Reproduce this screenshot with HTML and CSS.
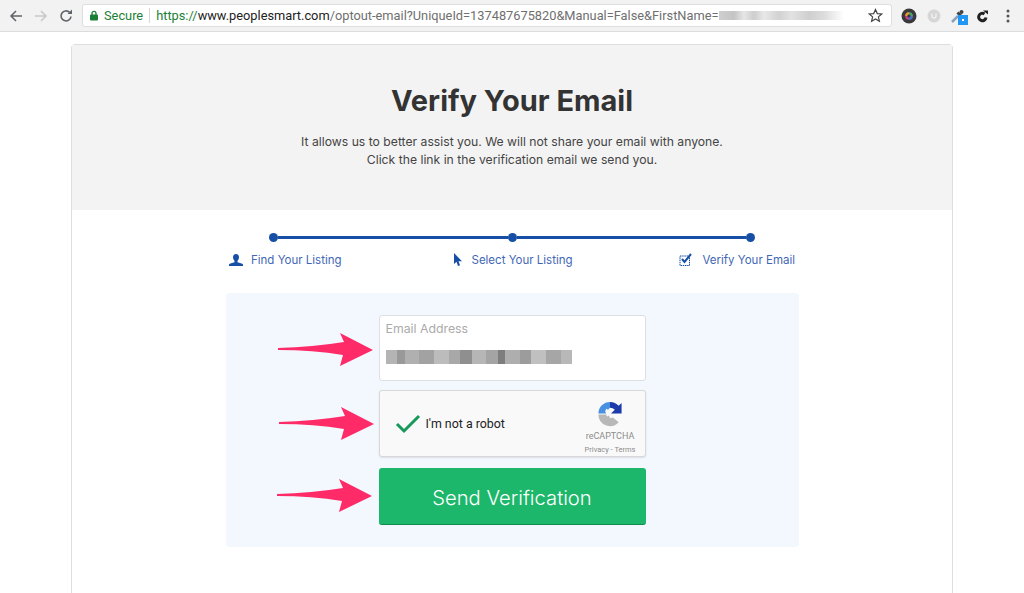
FILE: index.html
```html
<!DOCTYPE html>
<html lang="en">
<head>
  <meta charset="UTF-8">
  <title>Verify Your Email</title>
  <link rel="stylesheet" href="styles.css">
</head>
<body>
  <div class="toolbar">
    <svg class="nav-icon" width="16" height="16" viewBox="0 0 16 16"><path d="M14 8H3M8 3 3 8l5 5" fill="none" stroke="#5f6368" stroke-width="1.5"/></svg>
    <svg class="nav-icon" width="16" height="16" viewBox="0 0 16 16"><path d="M2 8h11M8 3l5 5-5 5" fill="none" stroke="#c8c8c8" stroke-width="1.5"/></svg>
    <svg class="nav-icon" width="16" height="16" viewBox="0 0 16 16"><path d="M13 8.500A5 5 0 1 1 11.600 4.400" fill="none" stroke="#5f6368" stroke-width="1.600"/><path d="M9.500 6h4.500V1.500z" fill="#5f6368"/></svg>
    <div class="omnibox">
      <svg class="lock" width="10" height="11" viewBox="0 0 10 11"><path d="M3 5V3.400a2 2 0 0 1 4 0V5" fill="none" stroke="#1b7f37" stroke-width="1.300"/><rect x="1" y="4.500" width="8" height="6" rx="1" fill="#1b7f37"/></svg>
      <span class="secure">Secure</span>
      <span class="url"><span class="https">https://</span><span class="domain">www.peoplesmart.com</span>/optout-email?UniqueId=137487675820&amp;Manual=False&amp;FirstName=</span>
      <div class="url-blur"></div>
      <svg class="star" width="15" height="15" viewBox="0 0 15 15"><path d="M7.500 1.500 9.300 5.600l4.400.4-3.300 2.900 1 4.300-3.900-2.300-3.900 2.300 1-4.300L1.300 6l4.400-.4z" fill="none" stroke="#444" stroke-width="1.200"/></svg>
    </div>
    <div class="extensions">
      <svg class="ext-shift" width="16" height="16" viewBox="0 0 16 16"><circle cx="8" cy="8" r="7.500" fill="#3a3a3a"/><circle cx="8" cy="8" r="2.800" fill="none" stroke="#d23c8c" stroke-width="2"/><path d="M8 5.200A2.800 2.800 0 0 1 10.800 8" fill="none" stroke="#2fb36a" stroke-width="2"/><path d="M5.200 8A2.800 2.800 0 0 1 8 5.200" fill="none" stroke="#f0a020" stroke-width="2"/><path d="M8 10.800A2.800 2.800 0 0 0 10.800 8" fill="none" stroke="#2f7fd6" stroke-width="2"/></svg>
      <svg class="ext-shift" width="16" height="16" viewBox="0 0 16 16"><circle cx="8" cy="8" r="6.500" fill="#d6d6d6"/><path d="M6 5.500V8a2 2 0 0 0 4 0V5.500" fill="none" stroke="#f1f1f1" stroke-width="1.300"/></svg>
      <div class="dropper">
        <svg width="16" height="16" viewBox="0 0 16 16"><path d="m2 14 6-6" stroke="#8aa0bd" stroke-width="2.500"/><path d="m7.500 4.500 4 4" stroke="#444" stroke-width="3"/><circle cx="11.500" cy="4" r="2" fill="#444"/></svg>
        <span class="ext-badge"><span class="ext-badge-dot"></span></span>
      </div>
      <svg width="16" height="16" viewBox="0 0 16 16"><path d="M9.500 6A3.700 3.700 0 1 0 11 9.500" fill="none" stroke="#222" stroke-width="3"/><path d="M8 2.500h5V6.500z" fill="#222"/></svg>
      <svg width="16" height="16" viewBox="0 0 16 16"><circle cx="8" cy="3" r="1.500" fill="#555"/><circle cx="8" cy="8" r="1.500" fill="#555"/><circle cx="8" cy="13" r="1.500" fill="#555"/></svg>
    </div>
  </div>

  <div class="page">
    <div class="card">
      <div class="hero">
        <h1>Verify Your Email</h1>
        <p>It allows us to better assist you. We will not share your email with anyone.<br>Click the link in the verification email we send you.</p>
      </div>

      <div class="steps">
        <div class="track">
          <span class="dot"></span>
          <span class="line"></span>
          <span class="dot"></span>
          <span class="line"></span>
          <span class="dot"></span>
        </div>
        <div class="step-labels">
          <div class="step step-first">
            <svg width="14" height="13" viewBox="0 0 14 13"><path d="M7 0c2 0 3 1.500 3 3.200 0 1.500-.8 2.900-1.500 3.600v1.400c2 .6 5 1.200 5.500 2.300V12H0v-1.500c.5-1.100 3.500-1.700 5.500-2.300V6.800C4.800 6.100 4 4.700 4 3.200 4 1.500 5 0 7 0z" fill="#174ea6"/></svg>
            <span>Find Your Listing</span>
          </div>
          <div class="step step-mid">
            <svg width="10" height="14" viewBox="0 0 10 14"><path d="M1 0v11l2.500-2.300L5 13l2-.7-1.500-4.100H9z" fill="#174ea6"/></svg>
            <span>Select Your Listing</span>
          </div>
          <div class="step">
            <svg width="14" height="14" viewBox="0 0 14 14"><rect x="1" y="3" width="9.500" height="9.500" fill="none" stroke="#174ea6" stroke-dasharray="1.500 .7"/><path d="m3 6 2.500 3L12 1" fill="none" stroke="#174ea6" stroke-width="2"/></svg>
            <span>Verify Your Email</span>
          </div>
        </div>
      </div>

      <div class="form-panel">
        <div class="form-row">
          <svg class="arrow arrow-email" width="95" height="34" viewBox="0 0 95 34"><path d="M0 15Q35 14 66 9L62 0 95 17 62 33 65 22Q35 17 0 17z" fill="#ff2a68"/></svg>
          <div class="email-box">
            <label>Email Address</label>
            <div class="email-blur"></div>
          </div>
        </div>
        <div class="form-row">
          <svg class="arrow arrow-captcha" width="95" height="34" viewBox="0 0 95 34"><path d="M0 15Q35 14 66 9L62 0 95 17 62 33 65 22Q35 17 0 17z" fill="#ff2a68"/></svg>
          <div class="captcha">
            <svg class="check" width="26" height="20" viewBox="0 0 26 20"><path d="m2 10 7 7L24 2" fill="none" stroke="#17995a" stroke-width="3"/></svg>
            <span class="captcha-text">I'm not a robot</span>
            <div class="captcha-logo">
              <svg width="28" height="27" viewBox="0 0 28 28"><path d="M2 13A12 12 0 0 1 14 1v6l-2 2-2-1-1 3 1 2z" fill="#4a90e2"/><path d="M14 1a12 12 0 0 1 9 4l3-3v11H15l4-4a7 7 0 0 0-5-2z" fill="#1c3aa9"/><path d="M2 14h8l1 2 2-1 1 3 3-1 6 5A12 12 0 0 1 2 14z" fill="#b8b8b8"/></svg>
              <span class="captcha-brand">reCAPTCHA</span>
              <span class="captcha-links">Privacy - Terms</span>
            </div>
          </div>
        </div>
        <div class="form-row form-row-send">
          <svg class="arrow arrow-send" width="95" height="34" viewBox="0 0 95 34"><path d="M0 15Q35 14 66 9L62 0 95 17 62 33 65 22Q35 17 0 17z" fill="#ff2a68"/></svg>
          <button class="send-btn">Send Verification</button>
        </div>
      </div>
    </div>
  </div>
</body>
</html>
```

FILE: styles.css
```css
* {
  box-sizing: border-box;
}

body {
  margin: 0;
  height: 593px;
  overflow: hidden;
  background: #fff;
  font-family: 'Inter', 'Liberation Sans', sans-serif;
}

/* browser bar */
.toolbar {
  display: flex;
  align-items: center;
  height: 32px;
  padding: 0 8px;
  background: #f2f2f2;
  border-bottom: 1px solid #dcdcdc;
}

.nav-icon {
  margin-right: 9px;
}

.omnibox {
  display: flex;
  align-items: center;
  flex: 1;
  height: 23px;
  margin-left: -1px;
  padding: 0 6px;
  background: #fff;
  border: 1px solid #dedede;
  border-radius: 3px;
  font-family: 'Roboto', 'Liberation Sans', sans-serif;
  font-size: 12.800px;
  white-space: nowrap;
}

.lock {
  margin-right: 5px;
}

.secure {
  padding-right: 6px;
  margin-right: 6px;
  border-right: 1px solid #d6d6d6;
  color: #1b7f37;
}

.url {
  color: #6f6f6f;
}

.https {
  color: #1b7f37;
}

.domain {
  color: #222;
}

.url-blur {
  flex: 1;
  height: 9px;
  margin: 0 24px 0 1px;
  background: linear-gradient(90deg, #cfcfcf, #c4c4c4 12%, #e6e6e6 20%, #cdcdcd 28%, #e8e8e8 36%, #d2d2d2 48%, #e2e2e2 58%, #cfcfcf 72%, #dcdcdc 84%, #fff);
  filter: blur(0.6px);
}

.star {
  margin-right: 2px;
}

.extensions {
  display: flex;
  align-items: center;
  gap: 9px;
  margin-left: 8px;
}

.ext-shift {
  transform: translateX(1px);
}

.dropper {
  position: relative;
  width: 16px;
  height: 16px;
}

.ext-badge {
  position: absolute;
  right: -2px;
  bottom: -1px;
  width: 10px;
  height: 10px;
  background: #2196f3;
}

.ext-badge-dot {
  position: absolute;
  left: 4px;
  top: 4px;
  width: 2px;
  height: 2px;
  background: #fff;
}

/* page */
.page {
  padding: 12px 71px 0;
}

.card {
  height: 560px;
  background: #fff;
  border: 1px solid #dedede;
  border-radius: 4px;
}

.hero {
  height: 165px;
  padding-top: 38px;
  background: #f3f3f3;
  text-align: center;
  color: #333;
}

.hero h1 {
  margin: 0 0 14px;
  font-size: 29px;
  line-height: 36px;
  font-weight: 700;
}

.hero p {
  margin: 0;
  font-size: 12.200px;
  line-height: 18px;
  color: #444;
}

.steps {
  width: 566px;
  margin: 0 auto;
  padding-top: 23px;
}

.track {
  display: flex;
  align-items: center;
  padding: 0 40px;
}

.dot {
  width: 9px;
  height: 9px;
  border-radius: 50%;
  background: #174ea6;
}

.line {
  flex: 1;
  height: 3px;
  background: #174ea6;
}

.step-labels {
  display: flex;
  justify-content: space-between;
  margin-top: 11px;
  font-size: 11.500px;
  color: #3f67b5;
}

.step {
  display: flex;
  align-items: center;
  gap: 9px;
}

.step-first {
  gap: 8px;
}

.step-mid {
  margin-left: 4px;
}

.form-panel {
  display: flex;
  flex-direction: column;
  align-items: center;
  gap: 9px;
  width: 573px;
  height: 254px;
  margin: 26px auto 0;
  padding-top: 22px;
  background: #f3f7fe;
  border-radius: 4px;
}

.form-row {
  position: relative;
  width: 267px;
}

.form-row-send {
  margin-top: 2px;
}

.arrow {
  position: absolute;
}

.arrow-email {
  left: -101px;
  top: 18px;
}

.arrow-captcha {
  left: -100px;
  top: 17px;
}

.arrow-send {
  left: -102px;
  top: 11px;
}

.email-box {
  height: 66px;
  padding: 5px 6px;
  background: #fff;
  border: 1px solid #dcdfe6;
  border-radius: 3px;
}

.email-box label {
  display: block;
  font-size: 12.300px;
  color: #aaa;
}

.email-blur {
  width: 186px;
  height: 14px;
  margin-top: 14px;
  background: linear-gradient(90deg, #b4b4b4 0 6%, #999 6% 10%, #b0b0b0 10% 18%, #a2a2a2 18% 26%, #bcbcbc 26% 34%, #a8a8a8 34% 40%, #8f8f8f 40% 46%, #b6b6b6 46% 54%, #a4a4a4 54% 60%, #7d7d7d 60% 64%, #aeaeae 64% 72%, #9c9c9c 72% 78%, #c0c0c0 78% 86%, #a6a6a6 86% 94%, #b8b8b8 94%);
  filter: blur(0.6px);
}

.captcha {
  display: flex;
  align-items: center;
  height: 67px;
  padding-left: 15px;
  background: #f9f9f9;
  border: 1px solid #d8d8d8;
  border-radius: 3px;
  box-shadow: 0 1px 2px rgba(0,0,0,0.1);
}

.captcha-text {
  margin-left: 5px;
  font-family: 'Roboto', 'Liberation Sans', sans-serif;
  font-size: 12.400px;
  color: #222;
}

.captcha-logo {
  display: flex;
  flex-direction: column;
  align-items: center;
  align-self: flex-start;
  margin-left: auto;
  margin-right: 9px;
  padding-top: 10px;
  color: #8c8c8c;
  font-family: 'Roboto', 'Liberation Sans', sans-serif;
}

.captcha-brand {
  margin-top: 3px;
  font-size: 9px;
  line-height: 11px;
}

.captcha-links {
  margin-top: 3px;
  font-size: 7.500px;
  line-height: 9px;
}

.send-btn {
  display: block;
  width: 100%;
  height: 57px;
  padding-top: 3px;
  background: #1cb76a;
  border: none;
  border-bottom: 1px solid #128a4e;
  border-radius: 3px;
  color: #fff;
  font-family: 'Inter', 'Liberation Sans', sans-serif;
  font-size: 20.200px;
  font-weight: 300;
}
```
